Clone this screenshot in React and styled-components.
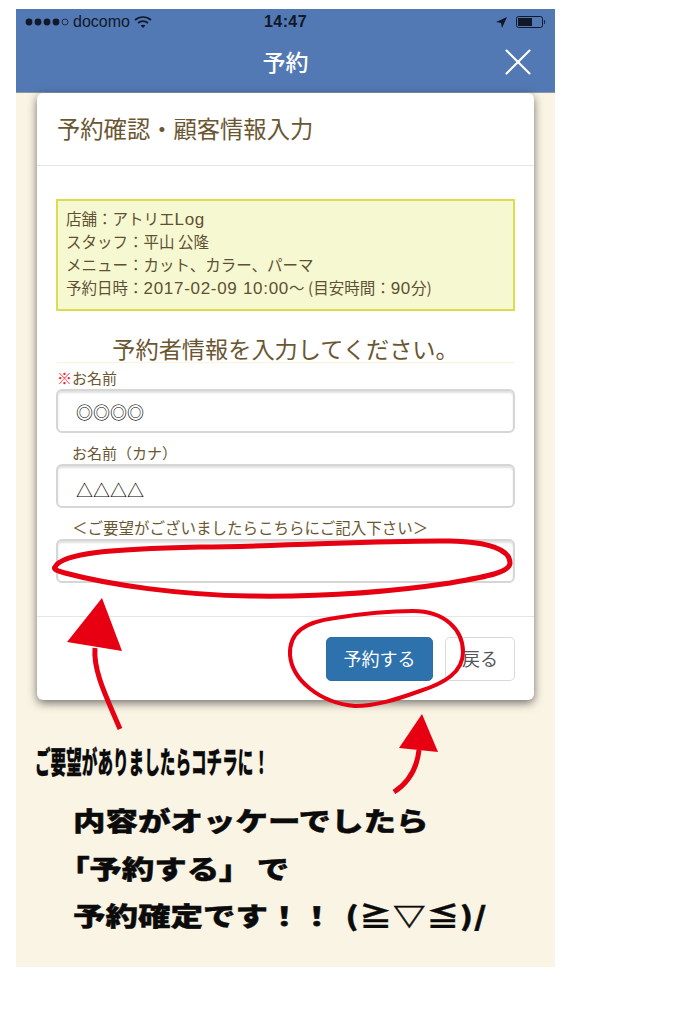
import React from 'react';
import styled, { createGlobalStyle } from 'styled-components';
import { X } from 'lucide-react';

const GlobalStyle = createGlobalStyle`
  html, body {
    margin: 0;
    background: #fff;
  }
  * {
    box-sizing: border-box;
  }
`;

const Page = styled.div`
  position: relative;
  width: 683px;
  height: 1024px;
  padding: 9px 0 0 16px;
  overflow: hidden;
  font-family: "Noto Sans CJK JP", "Noto Sans", sans-serif;
`;

const Screen = styled.div`
  width: 539px;
  height: 958px;
  background: #faf4e4;
  display: flex;
  flex-direction: column;
`;

const Header = styled.header`
  height: 84px;
  background: #5379b4;
  border-bottom: 1px solid #8d97a3;
  display: flex;
  flex-direction: column;
  flex-shrink: 0;
`;

const StatusBar = styled.div`
  height: 26px;
  padding: 0 9px;
  display: grid;
  grid-template-columns: 1fr auto 1fr;
  align-items: center;
  color: #10182a;
`;

const Carrier = styled.div`
  display: flex;
  align-items: center;
  gap: 4px;
  font-family: "Liberation Sans", sans-serif;
  font-size: 16px;
`;

const Clock = styled.div`
  font-family: "Liberation Sans", sans-serif;
  font-size: 16px;
  font-weight: 700;
  letter-spacing: 0.4px;
`;

const StatusRight = styled.div`
  display: flex;
  justify-content: flex-end;
  align-items: center;
  gap: 9px;
`;

const NavBar = styled.div`
  flex: 1;
  position: relative;
  display: flex;
  align-items: center;
  justify-content: center;
  padding-bottom: 5px;
  color: #fff;
  font-size: 23px;
  font-weight: 500;
`;

const Close = styled.span`
  position: absolute;
  right: 14px;
  top: 4px;
  display: flex;
`;

const Modal = styled.div`
  margin: 0 21px;
  width: 497px;
  height: 607px;
  background: #fff;
  border-radius: 6px;
  box-shadow: 0 3px 10px rgba(0, 0, 0, 0.55);
  display: flex;
  flex-direction: column;
  color: #6a5631;
`;

const ModalTitle = styled.div`
  height: 73px;
  padding: 0 20px;
  border-bottom: 1px solid #e5e5e5;
  display: flex;
  align-items: center;
  font-size: 23.3px;
  line-height: 1;
`;

const ModalBody = styled.div`
  flex: 1;
  padding: 33px 19px 0;
`;

const InfoBox = styled.div`
  height: 112px;
  padding: 6px 8px;
  background: #f6f8d2;
  border: 2px solid #dcdc50;
  font-size: 15.5px;
  line-height: 23px;
  color: #5e5032;
  white-space: nowrap;
`;

const Latin = styled.span`
  font-family: "Liberation Sans", sans-serif;
  font-size: 17px;
  line-height: 1;
  letter-spacing: 0.7px;
`;

const SectionTitle = styled.div`
  margin-top: 23px;
  height: 29px;
  border-bottom: 1px solid #fbf3dc;
  text-align: center;
  font-size: 23.2px;
  line-height: 28px;
  white-space: nowrap;
`;

const Label = styled.div`
  height: 26px;
  padding-left: ${(p) => p.$indent}px;
  font-size: ${(p) => p.$size}px;
  line-height: 29px;
  white-space: nowrap;
`;

const Required = styled.span`
  color: #f0222e;
`;

const FieldBox = styled.div`
  height: 44px;
  margin-bottom: 5px;
  padding: ${(p) => p.$drop || 0}px 18px 0;
  border: 2px solid #d6d6d6;
  border-radius: 6px;
  box-shadow: inset 0 2px 2px rgba(0, 0, 0, 0.12);
  display: flex;
  align-items: center;
  font-size: 17px;
  color: #000;
`;

const ModalFooter = styled.div`
  height: 84px;
  padding: 20px 19px 0 0;
  border-top: 1px solid #e5e5e5;
  display: flex;
  justify-content: flex-end;
  gap: 12px;
`;

const Button = styled.div`
  width: ${(p) => (p.$primary ? 107 : 70)}px;
  height: 44px;
  padding-bottom: 3px;
  border-radius: 5px;
  display: flex;
  align-items: center;
  justify-content: center;
  font-size: 18px;
  background: ${(p) => (p.$primary ? '#2d72ad' : '#fff')};
  color: ${(p) => (p.$primary ? '#fff' : '#555')};
  border: 1px solid ${(p) => (p.$primary ? '#2d6ea6' : '#d9d9d9')};
`;

const Notes = styled.div`
  margin-top: 44px;
  color: #0b0b0b;
  font-weight: 900;
`;

const SmallNote = styled.div`
  margin-left: 19px;
  font-size: 30px;
  line-height: 32px;
  white-space: nowrap;
  transform-origin: left center;
  transform: scaleX(0.52);
  -webkit-text-stroke: 0.3px #0b0b0b;
`;

const BigNote = styled.div`
  margin: 20px 0 0 57px;
  font-size: 26px;
  line-height: 47.5px;
  white-space: nowrap;
  transform-origin: left center;
  transform: scaleX(1.25);
  -webkit-text-stroke: 0.4px #0b0b0b;
`;

const Bracket = styled.span`
  font-feature-settings: "palt";
`;

const Particle = styled.span`
  margin-left: 17px;
`;

const Face = styled.span`
  margin-left: 10px;
  letter-spacing: 0.8px;
`;

const Drawing = styled.svg`
  position: absolute;
  top: 0;
  left: 0;
  pointer-events: none;
`;

const Signal = () => (
  <svg width="44" height="8" viewBox="0 0 44 8">
    {[4, 13, 22, 31].map((cx) => (
      <circle key={cx} cx={cx} cy="4" r="3.4" fill="#10182a" />
    ))}
    <circle cx="40" cy="4" r="3" fill="none" stroke="#10182a" strokeWidth="0.8" />
  </svg>
);

const Wifi = () => (
  <svg width="18" height="14" viewBox="0 0 18 14" fill="none" stroke="#10182a" strokeWidth="1.7">
    <path d="M1 5 C5.5 1 12.5 1 17 5" />
    <path d="M4 8 C6.8 5.6 11.2 5.6 14 8" />
    <path d="M9 13 L6.6 10.6 C8 9.6 10 9.6 11.4 10.6 Z" fill="#10182a" stroke="none" />
  </svg>
);

const Location = () => (
  <svg width="11" height="11" viewBox="0 0 11 11">
    <path d="M11 0 L0 5 L5 6 L6 11 Z" fill="#10182a" />
  </svg>
);

const Battery = () => (
  <svg width="30" height="12" viewBox="0 0 30 12">
    <rect x="0.5" y="0.5" width="26" height="11" rx="2" fill="none" stroke="#10182a" />
    <rect x="2" y="2" width="14" height="8" fill="#10182a" />
    <path d="M28 4 C29 4.5 29 7.5 28 8" fill="none" stroke="#10182a" />
  </svg>
);

const Annotations = () => (
  <Drawing width="683" height="1024" viewBox="0 0 683 1024" fill="none">
    <path
      d="M55 567 C62 553 110 549 200 547 C300 546 380 540 450 541 C490 542 510 550 510 563 C510 572 490 576 450 583 C390 592 320 597 250 596 C180 595 110 585 65 573 C57 571 53 569 55 567 Z"
      stroke="#e60012"
      strokeWidth="5"
    />
    <path
      d="M413 611 C445 611 463 630 463 652 C463 672 445 683 420 691 C395 700 375 706 355 706 C320 703 292 680 290 655 C289 632 305 622 335 618 C360 614 390 611 413 611 Z"
      stroke="#e60012"
      strokeWidth="4"
    />
    <path d="M102 598 L67 642 L122 651 Z" fill="#e60012" />
    <path d="M95 648 C93 672 108 700 120 729" stroke="#e60012" strokeWidth="5" />
    <path d="M422 714 L399 748 L438 752 Z" fill="#e60012" />
    <path d="M419 750 C417 768 408 783 394 792" stroke="#e60012" strokeWidth="5" />
  </Drawing>
);

const App = () => {
  return (
    <Page>
      <GlobalStyle />
      <Screen>
        <Header>
          <StatusBar>
            <Carrier>
              <Signal />
              docomo
              <Wifi />
            </Carrier>
            <Clock>14:47</Clock>
            <StatusRight>
              <Location />
              <Battery />
            </StatusRight>
          </StatusBar>
          <NavBar>
            予約
            <Close>
              <X size={46} strokeWidth={1.1} />
            </Close>
          </NavBar>
        </Header>
        <Modal>
          <ModalTitle>予約確認・顧客情報入力</ModalTitle>
          <ModalBody>
            <InfoBox>
              店舗：アトリエ<Latin>Log</Latin>
              <br />
              スタッフ：平山 公隆
              <br />
              メニュー：カット、カラー、パーマ
              <br />
              予約日時：<Latin>2017-02-09 10:00</Latin>〜 (目安時間：<Latin>90</Latin>分)
            </InfoBox>
            <SectionTitle>予約者情報を入力してください。</SectionTitle>
            <Label $indent={1} $size={15}>
              <Required>※</Required>お名前
            </Label>
            <FieldBox>◎◎◎◎</FieldBox>
            <Label $indent={16} $size={15}>お名前（カナ）</Label>
            <FieldBox $drop={7}>△△△△</FieldBox>
            <Label $indent={16} $size={15.5}>＜ご要望がございましたらこちらにご記入下さい＞</Label>
            <FieldBox />
          </ModalBody>
          <ModalFooter>
            <Button $primary>予約する</Button>
            <Button>戻る</Button>
          </ModalFooter>
        </Modal>
        <Notes>
          <SmallNote>ご要望がありましたらコチラに！</SmallNote>
          <BigNote>
            内容がオッケーでしたら
            <br />
            <Bracket>「</Bracket>予約する<Bracket>」</Bracket><Particle>で</Particle>
            <br />
            予約確定です！！<Face>(≧▽≦)/</Face>
          </BigNote>
        </Notes>
      </Screen>
      <Annotations />
    </Page>
  );
};

export default App;
